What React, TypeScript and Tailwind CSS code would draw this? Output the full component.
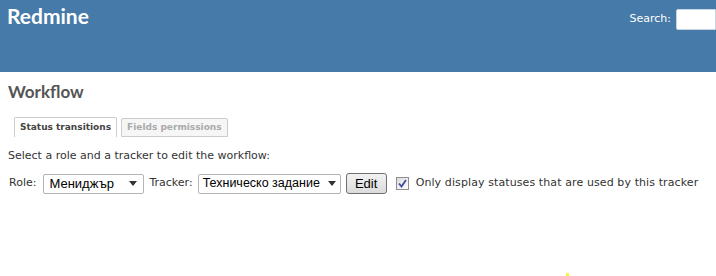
import React from "react";

export default function App() {
  const verdana = { fontFamily: '"DejaVu Sans", Verdana, sans-serif' };
  const title = { fontFamily: 'Lato, "Open Sans", sans-serif' };
  const arial = { fontFamily: '"Liberation Sans", Arial, sans-serif' };
  return (
    <div className="relative w-[716px] h-[276px] bg-white overflow-hidden" style={verdana}>
      <div className="h-[72px] bg-[#467aa8] flex justify-between items-start">
        <div className="pl-[7px] pt-[1px] text-[21px] leading-[30px] font-bold text-white" style={title}>
          Redmine
        </div>
        <div className="flex items-center pt-[9px] gap-[5px]">
          <span className="text-[11px] text-white">Search:</span>
          <div className="w-[40px] h-[21px] bg-white border border-[#c8d4e0] rounded-l-[2px]" />
        </div>
      </div>
      <div className="px-[8px]">
        <h2 className="mt-[9px] text-[17px] leading-[22px] font-bold text-[#555]" style={title}>
          Workflow
        </h2>
        <div className="mt-[14px] flex items-end gap-[4px] pl-[6px]">
          <div className="h-[20px] px-[5px] flex items-center border border-b-0 border-[#ccc] bg-white text-[9px] font-bold text-[#444] rounded-t-[2px]">
            Status transitions
          </div>
          <div className="h-[19px] px-[5px] flex items-center border border-[#ccc] bg-[#f6f6f6] text-[9px] font-bold text-[#aaa] rounded-t-[2px]">
            Fields permissions
          </div>
        </div>
        <p className="mt-[12px] text-[11px] leading-[14px] text-[#333]">Select a role and a tracker to edit the workflow:</p>
        <div className="mt-[10px] flex items-center text-[11px] text-[#333]">
          <span className="ml-[1px]">Role:</span>
          <div className="ml-[7px] w-[101px] h-[20px] border border-[#b5b5b5] rounded-[2px] bg-white flex items-center justify-between pl-[5px] pr-[6px] text-[13px] text-black" style={arial}>
            <span>Мениджър</span>
            <svg width="8" height="5" viewBox="0 0 8 5"><path d="M0 0h8L4 5z" fill="#333" /></svg>
          </div>
          <span className="ml-[5px]">Tracker:</span>
          <div className="ml-[5px] w-[143px] h-[20px] border border-[#b5b5b5] rounded-[2px] bg-white flex items-center justify-between pl-[4px] pr-[4px] text-[12.5px] text-black" style={arial}>
            <span>Техническо задание</span>
            <svg width="8" height="5" viewBox="0 0 8 5"><path d="M0 0h8L4 5z" fill="#333" /></svg>
          </div>
          <button className="ml-[5px] w-[41px] h-[21px] border border-[#707070] rounded-[3px] bg-gradient-to-b from-[#f2f2f2] to-[#dcdcdc] text-[13px] text-black flex items-center justify-center" style={arial}>
            Edit
          </button>
          <div className="ml-[9px] w-[13px] h-[13px] border border-[#8e8f8f] bg-gradient-to-br from-[#dcdcdc] to-white flex items-center justify-center">
            <svg width="9" height="9" viewBox="0 0 9 9"><path d="M1 4.5l2.5 3L8 1" stroke="#3a4fa0" strokeWidth="1.8" fill="none" /></svg>
          </div>
          <span className="ml-[7px] tracking-[0.1px]">Only display statuses that are used by this tracker</span>
        </div>
      </div>
      <span className="absolute left-[566px] top-[273px] w-[3px] h-[3px] bg-[#f5f542]" />
    </div>
  );
}
